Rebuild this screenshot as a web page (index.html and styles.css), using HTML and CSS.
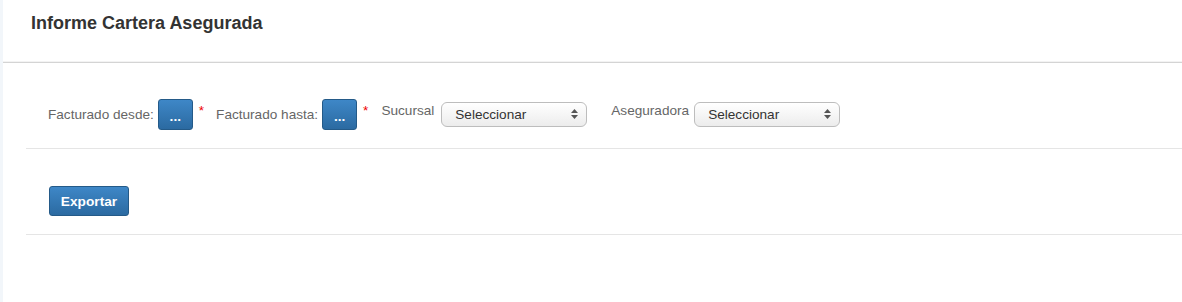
FILE: index.html
```html
<!DOCTYPE html>
<html lang="es">

<head>
    <meta charset="UTF-8">
    <meta name="viewport" content="width=device-width, initial-scale=1.0">
    <title>Informe Cartera Asegurada</title>
    <link rel="stylesheet" href="styles.css">
</head>

<body>
    <div class="page">
        <div class="page-header">
            <h1>Informe Cartera Asegurada</h1>
        </div>

        <div class="content">
            <div class="filter-row">
                <label class="lbl">Facturado desde:</label>
                <button class="btn btn-date">...</button>
                <span class="req">*</span>

                <label class="lbl">Facturado hasta:</label>
                <button class="btn btn-date">...</button>
                <span class="req">*</span>

                <label class="lbl lbl-up">Sucursal</label>
                <div class="select">
                    <span>Seleccionar</span>
                    <svg width="7" height="10" viewBox="0 0 7 10"><path d="M3.5 0 L7 4 L0 4 Z M0 6 L7 6 L3.5 10 Z" fill="#555"/></svg>
                </div>

                <label class="lbl lbl-up lbl-far">Aseguradora</label>
                <div class="select">
                    <span>Seleccionar</span>
                    <svg width="7" height="10" viewBox="0 0 7 10"><path d="M3.5 0 L7 4 L0 4 Z M0 6 L7 6 L3.5 10 Z" fill="#555"/></svg>
                </div>
            </div>

            <div class="action-row">
                <button class="btn btn-export">Exportar</button>
            </div>
        </div>
    </div>
</body>

</html>
```

FILE: styles.css
```css
* {
    margin: 0;
    padding: 0;
    box-sizing: border-box;
}

body {
    background-color: #fff;
    font-family: "Liberation Sans", Arial, sans-serif;
    font-size: 13.6px;
}

.page {
    min-height: 302px;
    border-left: 3px solid #f2f6fa;
}

.page-header {
    height: 63px;
    padding: 12px 0 0 28px;
    border-bottom: 1px solid #d4d4d4;
    box-shadow: inset 0 -1px 0 #f3f3f3;
}

.page-header h1 {
    font-size: 18px;
    font-weight: bold;
    color: #333;
    line-height: 22px;
}

.content {
    margin-left: 23px;
}

.filter-row {
    display: flex;
    align-items: center;
    height: 86px;
    padding: 36px 0 19px 22px;
    border-bottom: 1px solid #e5e5e5;
}

.lbl {
    color: #666;
    margin-right: 4px;
}

.lbl-up {
    margin-bottom: 8px;
    margin-right: 7px;
}

.lbl-far {
    margin-left: 24px;
    margin-right: 5px;
}

.req {
    color: #e00;
    margin: 0 12px 8px 6px;
}

.req:nth-of-type(2) {
    margin-right: 13px;
}

.btn {
    font-family: "Liberation Sans", Arial, sans-serif;
    color: #fff;
    font-weight: bold;
    font-size: 13.7px;
    border: 1px solid #245a88;
    border-radius: 3px;
    background: linear-gradient(#3e87c7, #2b6aa1);
    cursor: pointer;
}

.btn-date {
    width: 35px;
    height: 31px;
    padding-top: 4px;
}

.select {
    display: flex;
    align-items: center;
    justify-content: space-between;
    width: 146px;
    height: 25px;
    padding: 0 8px 0 13px;
    border: 1px solid #bdbdbd;
    border-radius: 6px;
    background: linear-gradient(#ffffff, #ececec);
    color: #333;
}

.action-row {
    height: 86px;
    padding: 37px 0 0 23px;
    border-bottom: 1px solid #e5e5e5;
}

.btn-export {
    width: 80px;
    height: 30px;
}
```
